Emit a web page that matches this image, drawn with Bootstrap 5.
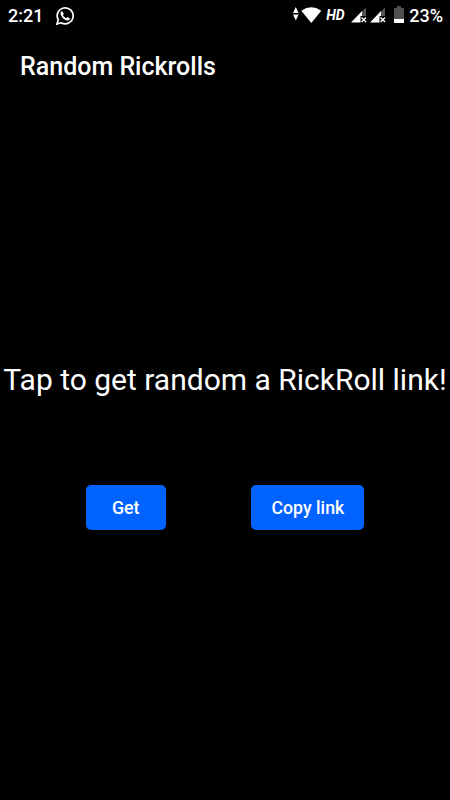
<!DOCTYPE html>
<html lang="en">
<head>
    <meta charset="UTF-8">
    <meta name="viewport" content="width=device-width, initial-scale=1.0">
    <title>Random Rickrolls</title>
    <!-- Bootstrap CSS -->
    <link href="https://cdn.jsdelivr.net/npm/bootstrap@5.3.2/dist/css/bootstrap.min.css" rel="stylesheet">
    <style>
        body {
            height: 100vh;
            background-color: #000;
            color: #fff;
            font-family: Roboto, sans-serif;
            overflow: hidden;
        }

        /* Status bar */
        .status-bar {
            height: 32px;
            padding: 0 7px 0 8px;
            font-size: 18px;
            font-weight: 500;
            line-height: 32px;
        }

        .status-bar svg {
            display: block;
            flex: none;
            margin-bottom: 2px;
        }

        .status-bar .whatsapp-icon {
            margin: 0 0 1px 11.5px;
        }

        .status-bar .battery-icon {
            margin: 0 5px 3px 8px;
        }

        .hd-label {
            width: 19px;
            font-size: 14px;
            font-weight: 700;
            font-style: italic;
            letter-spacing: -.2px;
            margin: 0 6px 0 4px;
            padding-bottom: 2px;
            line-height: 28px;
        }

        .sim-second {
            margin-left: 3px;
        }

        /* App bar */
        .app-bar {
            height: 68px;
            padding: 0 20px;
        }

        .app-title {
            font-size: 25px;
            font-weight: 500;
            line-height: 70px;
        }

        /* Page content */
        .message {
            margin-top: 256px;
            font-size: 30px;
            line-height: 48px;
            white-space: nowrap;
        }

        .actions {
            margin-top: 81px;
        }

        .btn-app {
            --bs-btn-color: #fff;
            --bs-btn-bg: #0062ff;
            --bs-btn-hover-color: #fff;
            --bs-btn-hover-bg: #0055dd;
            --bs-btn-active-color: #fff;
            --bs-btn-active-bg: #0049c0;
            min-width: 80px;
            height: 45px;
            padding: 1px 20px 0;
            border: 0;
            border-radius: 5px;
            font-size: 17.75px;
            font-weight: 500;
            line-height: 44px;
        }
    </style>
</head>
<body>
    <!-- Status bar -->
    <div class="status-bar d-flex align-items-center justify-content-between">
        <div class="d-flex align-items-center">
            <span>2:21</span>
            <svg class="whatsapp-icon" width="20" height="20" viewBox="0 0 20 20">
                <path d="M2 18l1.200-4.200A8 8 0 1 1 6.200 16.800z" fill="none" stroke="#fff" stroke-width="1.700"/>
                <path d="M7 5c-1.100.500-1.700 1.500-1.400 2.900.7 3.200 3.400 5.900 6.500 6.600 1.500.3 2.700-.6 2.900-2.100l-2.600-1.500-1.300 1.300c-1.500-.7-2.600-1.800-3.200-3.200L9 8z" fill="#fff"/>
            </svg>
        </div>
        <div class="d-flex align-items-center">
            <!-- Data arrows and wifi -->
            <svg width="29" height="17" viewBox="0 0 29 17">
                <path d="M0 6l2.800-6 2.800 6zM0 7.500h5.600L2.800 13.500z" fill="#fff"/>
                <path d="M18.300 16L8.300 3.700Q18.300-3 28.300 3.700z" fill="#fff"/>
            </svg>
            <span class="hd-label">HD</span>
            <!-- SIM signals -->
            <svg width="16" height="16" viewBox="0 0 16 16">
                <path d="M15 .500v8.500h-4V4.500z" fill="#555"/>
                <path d="M0 15.500L11 4v5H9.500v6.500z" fill="#fff"/>
                <path d="M10.500 10.500l4.500 4.500m0-4.500l-4.500 4.500" stroke="#fff" stroke-width="1.400"/>
            </svg>
            <svg class="sim-second" width="16" height="16" viewBox="0 0 16 16">
                <path d="M15 .500v8.500h-4V4.500z" fill="#555"/>
                <path d="M0 15.500L11 4v5H9.500v6.500z" fill="#fff"/>
                <path d="M10.500 10.500l4.500 4.500m0-4.500l-4.500 4.500" stroke="#fff" stroke-width="1.400"/>
            </svg>
            <svg class="battery-icon" width="10" height="17" viewBox="0 0 10 17">
                <path d="M3 0h4v2h3v11H0V2h3z" fill="#505050"/>
                <path d="M0 13h10v4H0z" fill="#fff"/>
            </svg>
            <span>23%</span>
        </div>
    </div>

    <!-- App bar -->
    <header class="app-bar">
        <h1 class="app-title mb-0">Random Rickrolls</h1>
    </header>

    <main>
        <p class="message text-center mb-0">Tap to get random a RickRoll link!</p>
        <div class="actions d-flex justify-content-evenly">
            <button type="button" class="btn btn-app">Get</button>
            <button type="button" class="btn btn-app">Copy link</button>
        </div>
    </main>

    <!-- Bootstrap JS Bundle -->
    <script src="https://cdn.jsdelivr.net/npm/bootstrap@5.3.2/dist/js/bootstrap.bundle.min.js"></script>
</body>
</html>
